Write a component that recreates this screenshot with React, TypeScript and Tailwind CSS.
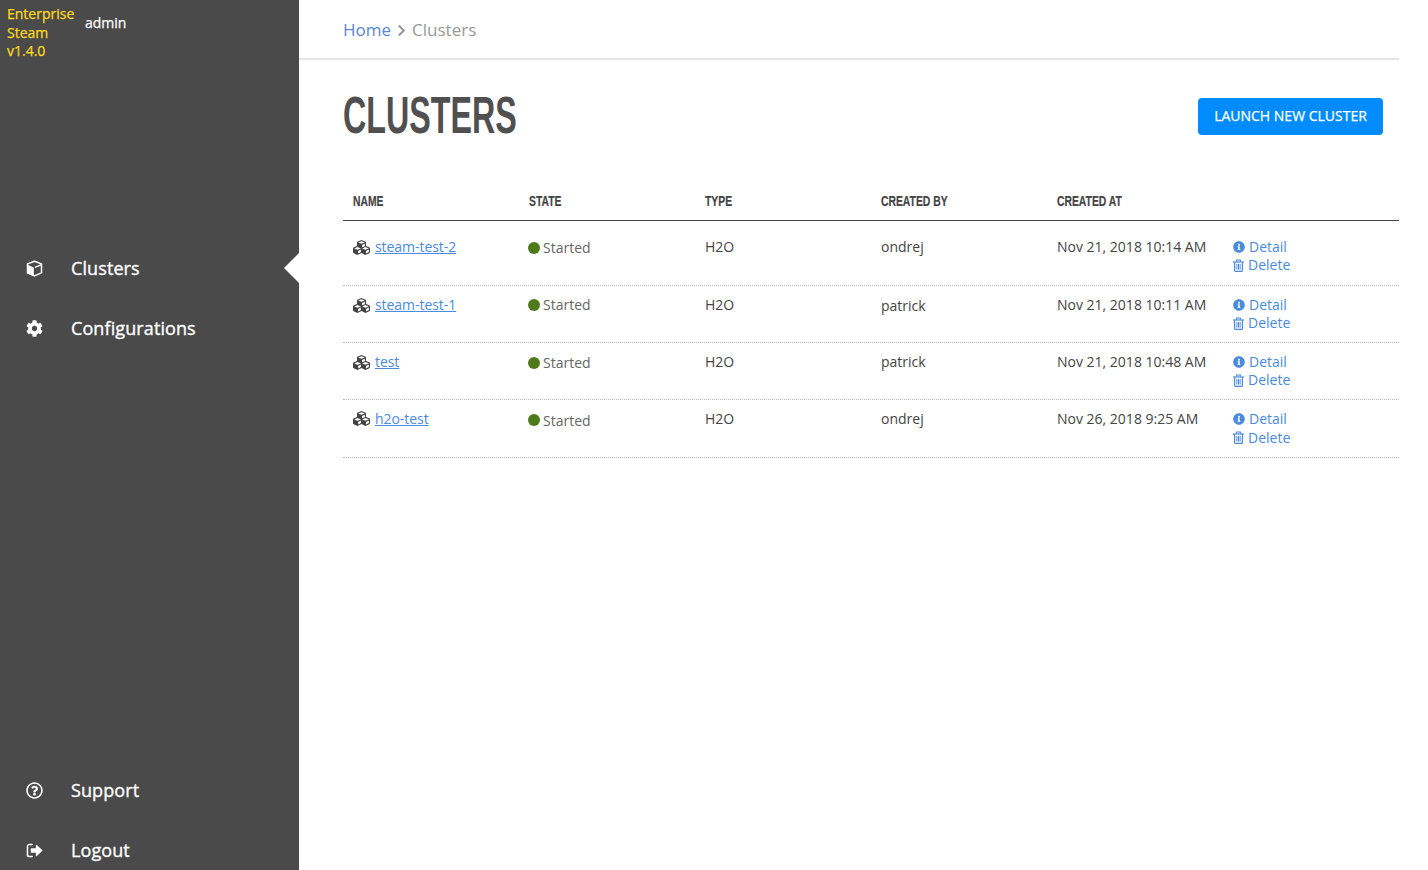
import React from 'react';
import { FaCubes, FaCog, FaRegQuestionCircle, FaInfoCircle } from 'react-icons/fa';

const clusters = [
  { name: 'steam-test-2', by: 'ondrej', at: 'Nov 21, 2018 10:14 AM', rowClass: 'h-[65px] pt-[17px]', lines: 'leading-[18px]', stateTop: 'mt-px', byTop: '' },
  { name: 'steam-test-1', by: 'patrick', at: 'Nov 21, 2018 10:11 AM', rowClass: 'h-[57px] pt-[10px]', lines: 'leading-[18px]', stateTop: '', byTop: 'mt-px' },
  { name: 'test', by: 'patrick', at: 'Nov 21, 2018 10:48 AM', rowClass: 'h-[57px] pt-[10px]', lines: 'leading-[18px]', stateTop: 'mt-px', byTop: '' },
  { name: 'h2o-test', by: 'ondrej', at: 'Nov 26, 2018 9:25 AM', rowClass: 'h-[58px] pt-[9px]', lines: 'leading-[19px]', stateTop: 'mt-[2px]', byTop: '' },
];

const CubeIcon = () => (
  <svg viewBox="0 0 17 17" className="w-[17px] h-[17px]" fill="none">
    <path d="M8.5 1.2l7 2.7v9l-7 3-7-3v-9z" stroke="white" strokeWidth="1.5" strokeLinejoin="round" />
    <path d="M1 4.6l6.8 2.8v8.8L1 13.3z" fill="white" />
    <path d="M9 7.4l6.5-2.7" stroke="white" strokeWidth="1.4" />
  </svg>
);

const SignOutIcon = () => (
  <svg viewBox="0 0 18 16" className="w-[17px] h-[15px]" fill="none">
    <path d="M6.5 1.5H3.5A2 2 0 0 0 1.5 3.5v9a2 2 0 0 0 2 2h3" stroke="white" strokeWidth="1.6" strokeLinecap="round" />
    <path d="M5.5 5.5h5V2.2a.4.4 0 0 1 .7-.3l6 5.6a.7.7 0 0 1 0 1l-6 5.6a.4.4 0 0 1-.7-.3v-3.3h-5a.5.5 0 0 1-.5-.5v-4a.5.5 0 0 1 .5-.5z" fill="white" />
  </svg>
);

const TrashIcon = () => (
  <svg viewBox="0 0 11 13" className="w-[11px] h-[13px]" fill="none" stroke="#4a8adf">
    <path d="M0 3h11" strokeWidth="1.2" />
    <path d="M3.6 2.8V1h3.8v1.8" strokeWidth="1.1" />
    <path d="M1.6 3.2v8.2a1 1 0 0 0 1 1h5.8a1 1 0 0 0 1-1V3.2" strokeWidth="1.2" />
    <path d="M3.9 5v5.6M5.5 5v5.6M7.1 5v5.6" strokeWidth="1" />
  </svg>
);

const NavItem: React.FC<{ icon: React.ReactNode; label: string; active?: boolean }> = ({ icon, label, active }) => (
  <div className="relative h-[60px] flex items-center text-white text-[18px] tracking-[0.1px] [-webkit-text-stroke:0.35px_white]">
    <span className="w-[71px] pl-[26px] flex items-center">{icon}</span>
    <span>{label}</span>
    {active && (
      <span className="absolute right-0 top-[15px] border-y-[15px] border-y-transparent border-r-[15px] border-r-white" />
    )}
  </div>
);

const App: React.FC = () => {
  return (
    <div className="flex h-[870px] overflow-hidden bg-white font-['Open_Sans',sans-serif] text-[14px] text-[#444]">
      <aside className="w-[299px] shrink-0 bg-[#4a4a4a] flex flex-col">
        <div className="h-[238px] flex items-start pt-[5px] pl-[7px]">
          <div className="w-[78px] text-[#ffd91a] text-[14px] leading-[18.5px] [-webkit-text-stroke:0.25px_#ffd91a]">
            Enterprise
            <br />
            Steam
            <br />
            v1.4.0
          </div>
          <div className="text-white text-[14px] leading-[18.5px] pt-[9px] [-webkit-text-stroke:0.25px_white]">admin</div>
        </div>
        <nav>
          <NavItem icon={<CubeIcon />} label="Clusters" active />
          <NavItem icon={<FaCog className="text-[17px]" />} label="Configurations" />
        </nav>
        <div className="mt-auto -mb-[10px]">
          <NavItem icon={<FaRegQuestionCircle className="text-[17px]" />} label="Support" />
          <NavItem icon={<SignOutIcon />} label="Logout" />
        </div>
      </aside>

      <main className="w-[1100px]">
        <div className="h-[60px] border-b-2 border-[#e5e5e5] pl-[44px] flex items-center gap-[6px] text-[17px] pt-[2px]">
          <a className="text-[#5b87d6]">Home</a>
          <svg viewBox="0 0 10 14" className="w-[9px] h-[13px]" fill="none">
            <path d="M2 1.5l5.5 5.5L2 12.5" stroke="#999" strokeWidth="2.4" />
          </svg>
          <span className="text-[#999]">Clusters</span>
        </div>

        <div className="h-[111px] pl-[44px] pr-[16px] flex items-center justify-between">
          <h1 className="font-['Liberation_Sans',sans-serif] font-bold text-[52px] leading-none text-[#505050] origin-left scale-x-[0.62] pb-[1px]">
            CLUSTERS
          </h1>
          <button className="w-[185px] h-[37px] mt-[2px] pb-[2px] rounded-[4px] bg-[#008cff] text-white text-[14px] [-webkit-text-stroke:0.25px_white]">
            LAUNCH NEW CLUSTER
          </button>
        </div>

        <div className="ml-[44px]">
          <div className="grid grid-cols-6 h-[50px] border-b border-[#444] items-end pb-[8px] font-['Liberation_Sans',sans-serif] font-bold text-[14px] text-[#444] [-webkit-text-stroke:0.2px_#444]">
            {['NAME', 'STATE', 'TYPE', 'CREATED BY', 'CREATED AT'].map((h) => (
              <div key={h} className="pl-[10px]">
                <span className="inline-block origin-left scale-x-[0.74] whitespace-nowrap">{h}</span>
              </div>
            ))}
          </div>
          {clusters.map((c) => (
            <div key={c.name} className={`grid grid-cols-6 border-b border-dotted border-[#bbb] ${c.lines} ${c.rowClass}`}>
              <div className="pl-[10px] flex items-start gap-[5px]">
                <FaCubes className="text-[17px] text-[#444] mt-[0.5px]" />
                <a className="text-[#4a8adf] underline tracking-[-0.05px]">{c.name}</a>
              </div>
              <div className={`pl-[9px] flex items-start gap-[3px] text-[#666] ${c.stateTop}`}>
                <span className="w-[12px] h-[12px] rounded-full bg-[#4f7a1c] mt-[2.5px]" />
                <span>Started</span>
              </div>
              <div className="pl-[10px]">H2O</div>
              <div className={`pl-[10px] ${c.byTop}`}>{c.by}</div>
              <div className="pl-[10px] whitespace-nowrap">{c.at}</div>
              <div className="pl-[10px] text-[#4a8adf]">
                <div className="flex items-center gap-[4px]">
                  <FaInfoCircle className="text-[12px]" />
                  Detail
                </div>
                <div className="flex items-center gap-[4px]">
                  <TrashIcon />
                  Delete
                </div>
              </div>
            </div>
          ))}
        </div>
      </main>
    </div>
  );
};

export default App;
